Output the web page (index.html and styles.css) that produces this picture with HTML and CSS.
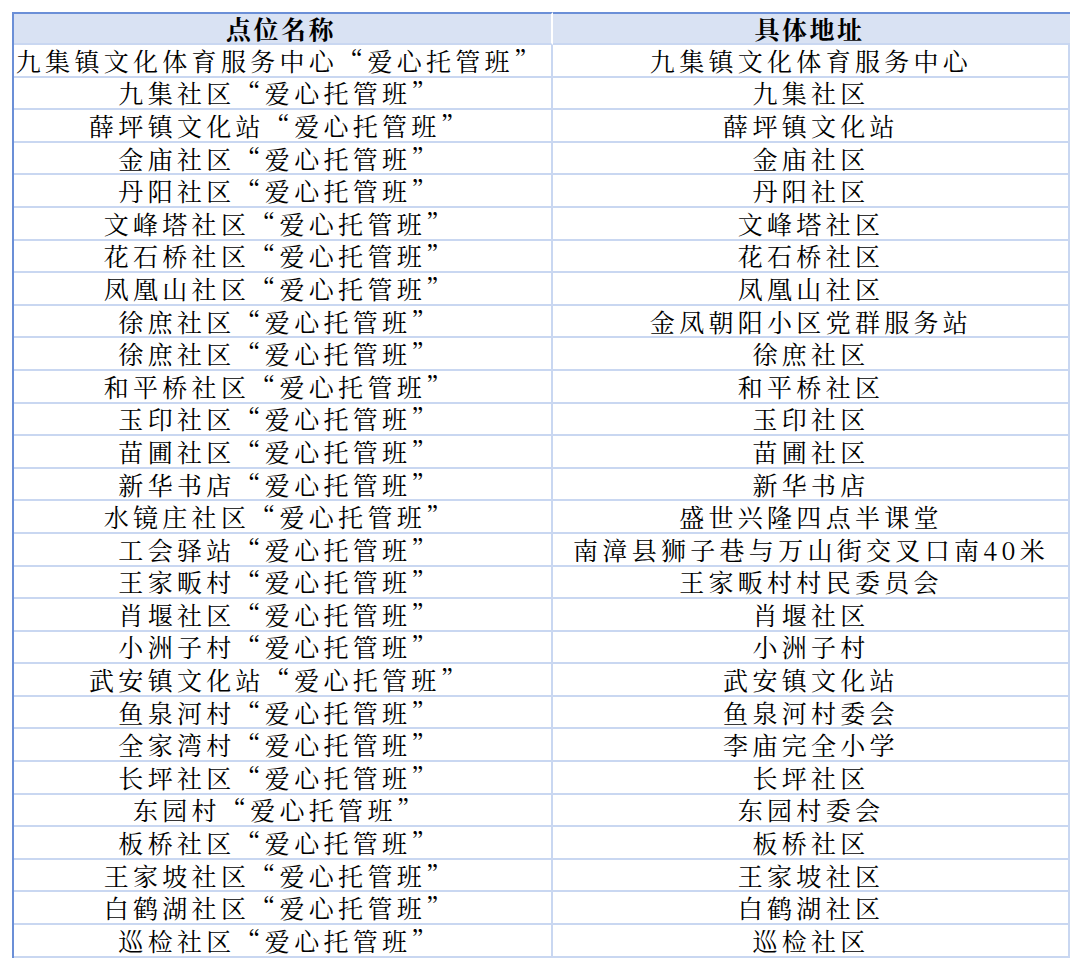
FILE: index.html
```html
<!DOCTYPE html>
<html lang="zh-CN">
<head>
<meta charset="utf-8">
<title>爱心托管班点位</title>
<link rel="stylesheet" href="styles.css">
</head>
<body>
<div class="sheet">
  <div class="cell head left">点位名称</div><div class="cell head right">具体地址</div>
  <div class="cell left">九集镇文化体育服务中心“爱心托管班”</div><div class="cell right">九集镇文化体育服务中心</div>
  <div class="cell left">九集社区“爱心托管班”</div><div class="cell right">九集社区</div>
  <div class="cell left">薛坪镇文化站“爱心托管班”</div><div class="cell right">薛坪镇文化站</div>
  <div class="cell left">金庙社区“爱心托管班”</div><div class="cell right">金庙社区</div>
  <div class="cell left">丹阳社区“爱心托管班”</div><div class="cell right">丹阳社区</div>
  <div class="cell left">文峰塔社区“爱心托管班”</div><div class="cell right">文峰塔社区</div>
  <div class="cell left">花石桥社区“爱心托管班”</div><div class="cell right">花石桥社区</div>
  <div class="cell left">凤凰山社区“爱心托管班”</div><div class="cell right">凤凰山社区</div>
  <div class="cell left">徐庶社区“爱心托管班”</div><div class="cell right">金凤朝阳小区党群服务站</div>
  <div class="cell left">徐庶社区“爱心托管班”</div><div class="cell right">徐庶社区</div>
  <div class="cell left">和平桥社区“爱心托管班”</div><div class="cell right">和平桥社区</div>
  <div class="cell left">玉印社区“爱心托管班”</div><div class="cell right">玉印社区</div>
  <div class="cell left">苗圃社区“爱心托管班”</div><div class="cell right">苗圃社区</div>
  <div class="cell left">新华书店“爱心托管班”</div><div class="cell right">新华书店</div>
  <div class="cell left">水镜庄社区“爱心托管班”</div><div class="cell right">盛世兴隆四点半课堂</div>
  <div class="cell left">工会驿站“爱心托管班”</div><div class="cell right">南漳县狮子巷与万山街交叉口南40米</div>
  <div class="cell left">王家畈村“爱心托管班”</div><div class="cell right">王家畈村村民委员会</div>
  <div class="cell left">肖堰社区“爱心托管班”</div><div class="cell right">肖堰社区</div>
  <div class="cell left">小洲子村“爱心托管班”</div><div class="cell right">小洲子村</div>
  <div class="cell left">武安镇文化站“爱心托管班”</div><div class="cell right">武安镇文化站</div>
  <div class="cell left">鱼泉河村“爱心托管班”</div><div class="cell right">鱼泉河村委会</div>
  <div class="cell left">全家湾村“爱心托管班”</div><div class="cell right">李庙完全小学</div>
  <div class="cell left">长坪社区“爱心托管班”</div><div class="cell right">长坪社区</div>
  <div class="cell left">东园村“爱心托管班”</div><div class="cell right">东园村委会</div>
  <div class="cell left">板桥社区“爱心托管班”</div><div class="cell right">板桥社区</div>
  <div class="cell left">王家坡社区“爱心托管班”</div><div class="cell right">王家坡社区</div>
  <div class="cell left">白鹤湖社区“爱心托管班”</div><div class="cell right">白鹤湖社区</div>
  <div class="cell left">巡检社区“爱心托管班”</div><div class="cell right">巡检社区</div>
</div>
</body>
</html>
```
FILE: styles.css
```css
html, body {
  margin: 0;
  padding: 0;
  background: #ffffff;
}
body {
  padding: 12px 0 0 12px;
  font-family: "Noto Serif CJK SC", "Noto Sans CJK SC", serif;
  color: #000000;
}
.sheet {
  display: grid;
  grid-template-columns: 539px 517px;
  grid-template-rows: 33px;
  grid-auto-rows: 32.6px;
  width: 1056px;
  border-left: 2px solid #6b8fd7;
  box-sizing: border-box;
}
.cell {
  display: flex;
  align-items: center;
  justify-content: center;
  font-size: 25px;
  letter-spacing: 4.3px;
  line-height: 1;
  white-space: nowrap;
  border-bottom: 2px solid #c9d7f1;
  border-right: 2px solid #c9d7f1;
  box-sizing: border-box;
}
.left {
  padding-left: 0;
  padding-right: 6px;
}
.right {
  padding-left: 1px;
  padding-right: 0;
}
.head {
  background: #d9e2f3;
  border-top: 2px solid #6b8fd7;
  border-right: 2px solid #ffffff;
  font-weight: 700;
  letter-spacing: 2.5px;
  padding-bottom: 1px;
}
.head.left {
  padding-left: 0;
  padding-right: 3px;
}
.head.right {
  border-right: none;
  padding-left: 0;
  padding-right: 4px;
}
```
